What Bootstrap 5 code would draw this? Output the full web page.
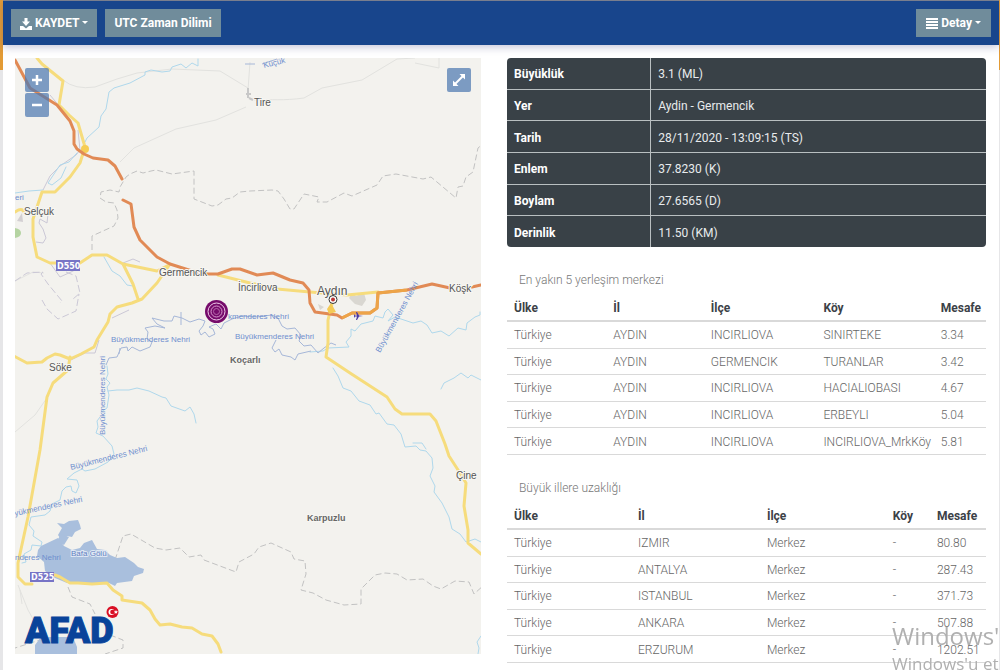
<!DOCTYPE html>
<html lang="tr">
<head>
<meta charset="utf-8">
<meta name="viewport" content="width=device-width, initial-scale=1">
<title>Deprem Detayı</title>
<link href="https://cdn.jsdelivr.net/npm/bootstrap@5.3.0/dist/css/bootstrap.min.css" rel="stylesheet">
<style>
body{font-family:Roboto,"Noto Sans",sans-serif;font-size:12px;line-height:18px;color:#777;background:linear-gradient(#e39b35 70px,#e6e6e8 70px) no-repeat #e6e6e8}
.panel{margin:0 1px 0 3px;min-height:100vh;background:#fff;border-top:1px solid #7f8490}
.topbar{background:#18458c;height:44px;padding:0 8px;box-shadow:0 2px 8px rgba(60,60,130,.3)}
.topbar .btn{--bs-btn-bg:#708c9b;--bs-btn-color:#fff;--bs-btn-border-color:#708c9b;--bs-btn-hover-bg:#607d8b;--bs-btn-border-radius:0;--bs-btn-font-size:12px;--bs-btn-font-weight:700;--bs-btn-padding-x:8px;--bs-btn-padding-y:4px;line-height:18px;height:28px}
.topbar .dropdown-toggle::after{border-width:3px;margin-left:3px}
.topbar .btn-detail{--bs-btn-padding-x:9px}
.content-grid{display:grid;grid-template-columns:466fr 479fr;gap:26px;padding:13px 13px 0 12px}
.map-canvas{display:block;width:100%;background:#f3f2ee}
.map-btn{width:24px;height:24px;border:0;padding:0;background:rgba(77,120,178,.72);color:#fff;border-radius:2px}
.zoom-box{left:10px;top:10px;gap:1px}
.full-box{right:10px;top:10px}
.town{font:10px "Liberation Sans",sans-serif;fill:#555;paint-order:stroke;stroke:#f7f6f2;stroke-width:2px}
.town-small{font-weight:700;font-size:9px;fill:#666}
.town-city{font-size:12px}
.river{font:8px "Liberation Sans",sans-serif;fill:#6f8fce}
.lake-label{fill:#5f80c2;paint-order:stroke;stroke:#dfe7f3;stroke-width:2px}
.shield{font:bold 8px "DejaVu Sans",sans-serif;fill:#fff}
.brandmark{font:900 36px Roboto,sans-serif;fill:#09439a;stroke:#09439a;stroke-width:1px}
.detail-table{height:189px;background:#394147;color:#e8ebed;border-radius:4px;overflow:hidden}
.detail-table th,.detail-table td{padding:6px 7px 4px;vertical-align:middle;border-bottom:1px solid #b9bfc1}
.detail-table th{width:30%;color:#fff;border-right:1px solid #b9bfc1}
.detail-table tr:last-child>*{border-bottom:0}
.section-title{font-size:12px;line-height:18px;font-weight:300;color:#777;margin:24px 0 6px 12px}
.distance-table{height:160px;table-layout:fixed;font-weight:300;color:#666}
.distance-table th,.distance-table td{padding:4px 0 3px 7px;vertical-align:middle;white-space:nowrap;border-bottom:1px solid #d9d9d9}
.distance-table th{color:#3c4147;font-weight:700;border-bottom:2px solid #d9d9d9}
.watermark{left:calc(100% - 108px);bottom:-8px;color:#b0b0b0;font-family:"Open Sans",sans-serif;pointer-events:none;white-space:nowrap}
.watermark-title{font-size:24px;line-height:28px}
.watermark-sub{font-size:17px;line-height:28px}
</style>
</head>
<body class="overflow-hidden">
<main class="panel">
<header class="topbar d-flex align-items-center position-relative">
  <button class="btn dropdown-toggle me-2" type="button"><svg width="12" height="12" viewBox="0 0 12 12" fill="#fff" aria-hidden="true"><path d="M4.500 0h3v3.500H10L6 8 2 3.500h2.500zM0 8h3l3 2.500L9 8h3v4H0z"/></svg> KAYDET</button>
  <button class="btn" type="button">UTC Zaman Dilimi</button>
  <button class="btn btn-detail dropdown-toggle ms-auto" type="button"><svg width="12" height="12" viewBox="0 0 12 12" fill="#fff" aria-hidden="true"><path d="M0 0h12v2H0zM0 3h12v2H0zM0 6h12v2H0zM0 9h12v2H0z"/></svg> Detay</button>
</header>
<div class="content-grid">
<section class="position-relative align-self-start">
<svg class="map-canvas" viewBox="15 58 466 596" role="img" aria-label="Harita">
  <g fill="none" stroke="#e2e2df" stroke-width="1">
    <path d="M63 80q12 10 32 7l22-8 20-6 35-4 48 2 28 17M250 62l-2 28q-2 10 8 10c16-1 26 1 48-2l18-10 40-8 35-21 18-1M120 162l14-14 42-19 40-9 30-13M415 63l24 5V58M15 432l20-17 14-20M18 585l10 25 18 32"/>
    <path d="M15 281l18-9 11 1M20 590l2 14"/>
  </g>
  <path d="M248 88v10m-2-4h5m-2 4l4 2" fill="none" stroke="#c8c8c8" stroke-width="2"/>
  <g fill="none" stroke="#c2c2c2" stroke-width="1" stroke-dasharray="6 3" stroke-linejoin="round">
    <path d="M92 250v-14l22-10 4-8-1-8-3-7-8-1-6-4 1-6 9-2 9 2 1-5 6-10 4-3 7-3 6 2 8-2 5-1 16 4 22-3v28l18 7 6-1 8-6 6-1 8-6 10-1 22-1 6 1 6 8 6 10h4l8-12 2-3 15 3-2 5h10l17-9 8 3 25-11 6-9 13-2 27 5 8-2 25 21 2-11 5-1 3-9 7-5 5-24 5-4 9 7 16 4"/>
    <path d="M115 560l8-24 8-2 24 14 11 2 14-2 9 9 12-2 3 5 32 12 3-10 15-8 5-7 12-4 20 9 3 7 11 2 1 13-5 16 12 3 13 7 18 5 17-1v-15l14-14 10-2 12 1 10 6 16-1 10 7 8 3 14-8 14 1 5 12 10-9 20 2"/>
    <path d="M68 587l4 10 18 7 5 10M110 635l13 5v8l-18 6M43 639l-28 9"/>
  </g>
  <g fill="none" stroke="#cbc8d6" stroke-width="1" stroke-linejoin="round">
    <path d="M78 130l2 20-4 5-16 11-10 10-7 14M43 208l5 6-1 9-7-4-1 4 4 6 3 9-3 5-7-1"/>
    <path d="M15 281l12-8 16-1-2 2 7 10 14 17-2 2M66 272l10 4 4 17-7 6M42 300l5 9 11 10 18-8 3-17" stroke-dasharray="7 3"/>
    <path d="M50 263l10 14 11-5 8-4M71 360l14-7h10l4-13M112 318l17-8M123 263l10-4 7 3M50 95l10 12"/>
  </g>
  <g fill="none" stroke="#afd8ec" stroke-width="1" stroke-linejoin="round" stroke-linecap="round">
    <path d="M85 142l2-4 12-11 2-11 5-7 3-17 5-4 16-5 15-8v-3l6-2 11 2 8-1 2-4 9-3 5 4 6-5 6 3v-7M77 153l-8 9-9 3-12 18 4 2 9-7 5-11M43 190l-14 1-14 2M104 257l8 14 8 5 7 9 6 1"/>
    <path d="M107 366l1 8-2 5 4 4-3 4 2 8-2 13-6 4M108 391l9-1h12l8-2 12 3 13 6 4 1 5 8 14 5 5-4 4 7 2 9M100 417l-3 4 1 6-2 6 7 3 9 10 2 8-6 8-13 7-10 2-3-2-8 4-7 6 10 1 2 6-3 7-4-2-1-5-5 1-4 4-2 9-8 4-2 7-5 4-14 2-2 8 5 6-1 5 9 6-1 4-9-1-1 5-7 4 2 8-4 1"/>
    <path d="M310 352l13-1 5-3 21-1-3-5 5-6v-7l4 2 6-7 12-3 2-5 8 2 2-6 3-3 5 6-5 6 7-4 18 6 8-2 6 4 5 8 9-2 8 5 9-8 8 2 1-7 8-6 5-2v-3M441 389l3-6 10-5 7-5 7 5 3-3 10 5M333 368l5 8 5 12 8 3 8 10 11 4 6 9 3-1 8 11 7 1 7 9 4 13 11-1 4 4 6 1 6 7 1 10-3 8 5 10-1 6 8 11 7 14 3 12 8 5 6 8 9-3 8 4-1 6 5 4M413 443h9l4 6M481 636l-4 6 2 6-1 6"/>
  </g>
  <g fill="none" stroke="#a6b7d8" stroke-width="1" stroke-linejoin="round">
    <path d="M106 365l3-7 8-1 4-9 6-1 1 4 4-4 8 4 10-4 2-5-5-3 1-7-3-4 10-2 10 2-8-4-5-6 12 3h8l2-5 8 2 8 4 9-3 6 2-2 5-4 5 2 4 4-3 4 5 6-3-2-5-4-2 7-3 5 5 3-6 8-4 10-3 14 1 16-2 6 3 4 8 5 3 8-1 6 7-2 6 5 5 7-1 7 8 6-5 7-5 5 2M181 312v13M120 348l-1 6M276 340l-4 8 3 4 4-3 3 6 9 2 4 3 3-6 13-3"/>
    <path d="M245 64h10M262 64l15-5"/>
  </g>
  <g fill="#a9bfdd">
    <path d="M38 550l3-4 17-8 6 8 8 4 8-2 4-5 8-3 5 9 8 1 5 5 7 3 8-1 9 6 4 4 6 2-1 4-9 3-2 5-15 2-2 3-6-3-20 1-22-1-12-5-10-7-1-9-7-6z"/>
    <path d="M35 654v-9l6-8h32l4 10v7z"/>
    <path d="M57 523l7 1 5-3 9-1 2 5 1 4-6 3-3 5-5-1-4 5-3-3-2-3 4-7z"/>
    <path d="M61 534l8 3-5 8-7-4z"/>
  </g>
  <path d="M352 293l4 3 8-3 2 7-4 6-7-2-6-6zM318 304l6 3-4 3zM312 280l4-1M322 277l3 1" fill="#d9d7d1"/>
  <path d="M17 221l5-8 1 9z" fill="#d3cfd2"/>
  <path d="M15 228q6 1 6 5t-6 5z" fill="#b5d4a2"/>
  <g fill="none" stroke="#f6dc7c" stroke-width="3" stroke-linejoin="round" stroke-linecap="round">
    <path d="M37 58l5 6 21 17-4 24 10 10 9 8 7 24-5 16-10 14-15 15H42l-9 27v18l4 20 13 6h6M80 263l12-8h15l16 9 34 7 12-6M123 264l10 20 5 15M170 264l-13 19-15 16-10 4-15 4-7 7-2 8-11 18-3 7-13 7-11 5-10-4-5-1-8 4-5 4-15 1-15-8M70 357l-2 13-15 13-6 14-7 53-12 67-10 46v14l7 7h7M55 575l5 2 10 6h8l14 1 15-1 6 7 9 6v4l20 3 8 7 5 9 5 6 10-1 12 3 10 1 10 6 10 2 6 8 3 8" />
    <path d="M218 275l32 8 27 6 33 3 37 3 31-3M333 300l-5 20v23l-2 14 24 16 37 24 8 12 7 5h28l6 7 9 23 4 12 11 17 6 10-2 23 4 24v13l13 11"/>
    <path d="M15 212q7-5 9 0" />
  </g>
  <circle cx="85" cy="149" r="4" fill="#f6cd55"/>
  <g fill="none" stroke="#e18a55" stroke-width="3" stroke-linejoin="round" stroke-linecap="round">
    <path d="M15 60l15 28 27 17 13 16 4 10v13l3 5 7 5 9 4 15 2 7 6 7 13M123 200l8 4 3 23 6 13 17 17 13 7 22 7 15 3h11l14-5h8l17 6 16-2 17 7 13 3 6 7 1 13 5 9 22 3 5 3 10-5h18l7-5 1-15 29-3 25-6 18 4M472 287l9-2"/>
  </g>
  <path d="M342 318l10-5h18l7-5 1-15 29-3" fill="none" stroke="#eda448" stroke-width="3" stroke-linejoin="round"/>
  <path d="M327 309l4-6 5 9-7 2z" fill="#f4ca55"/>
  <g fill="#7774c6"><path d="M56 260h24v11H56zM30 572h24v10H30z"/></g>
  <text class="shield" x="57" y="269">D550</text><text class="shield" x="31" y="580">D525</text>
  <text class="river" x="111" y="342">Büyükmenderes Nehri</text>
  <text class="river" x="228" y="319">kmenderes Nehri</text>
  <text class="river" x="235" y="339">Büyükmenderes Nehri</text>
  <text class="river" transform="translate(105 435) rotate(-90)">Büyükmenderes Nehri</text>
  <text class="river" transform="translate(380 353) rotate(-61)">Büyükmenderes Nehri</text>
  <text class="river" transform="translate(71 470) rotate(-14)">Büyükmenderes Nehri</text>
  <text class="river" transform="translate(15 516) rotate(-12)">yükmenderes Nehri</text>
  <text class="river" x="15" y="560">nderes Nehri</text>
  <text class="river lake-label" x="71" y="556">Bafa Gölü</text>
  <text class="river" x="15" y="200">eri</text>
  <text class="river" transform="translate(264 68) rotate(-14)">Küçük</text>
  <text class="town" x="254" y="106">Tire</text><text class="town" x="24" y="215">Selçuk</text>
  <text class="town" x="159" y="276">Germencik</text><text class="town" x="238" y="291">İncirliova</text>
  <text class="town town-city" x="317" y="295">Aydın</text>
  <text class="town" x="449" y="292">Köşk</text><text class="town town-small" x="230" y="363">Koçarlı</text>
  <text class="town" x="49" y="371">Söke</text><text class="town" x="456" y="479">Çine</text><text class="town town-small" x="307" y="521">Karpuzlu</text>
  <circle cx="333" cy="299.500" r="4" fill="#fff" stroke="#333"/><circle cx="333" cy="299.500" r="2" fill="#b33"/>
  <path d="M363 316l-4-.5-2-3.500h-1l1 3.500h-2l-1-1.500v4l1-1.500h2l-1 3.500h1l2-3.500z" fill="#4939a5"/>
  <circle cx="216.500" cy="311.500" r="11.500" fill="#760b6b"/><g fill="none" stroke="#efc9e9"><circle cx="216.500" cy="311.500" r="8.500"/><circle cx="216.500" cy="311.500" r="5.500" stroke="#d99bcf"/><circle cx="216.500" cy="311.500" r="3" stroke="#b566aa"/></g>
  <text class="brandmark" x="25" y="643">AFAD</text>
  <circle cx="112.500" cy="612" r="6" fill="#d90f24"/><circle cx="111.500" cy="612" r="3" fill="#fff"/><circle cx="112.500" cy="612" r="2.300" fill="#d90f24"/><path d="M116 610l.6 1.300 1.400.2-1.100.9.300 1.400-1.200-.7-1.300.7.300-1.400-1-.9 1.400-.2z" fill="#fff"/>
</svg>
<div class="zoom-box position-absolute d-flex flex-column">
  <button class="map-btn" type="button" aria-label="Yakınlaştır"><svg width="10" height="10" viewBox="0 0 10 10" class="d-block mx-auto"><path d="M5 0v10M0 5h10" stroke="#fff" stroke-width="2.500"/></svg></button>
  <button class="map-btn" type="button" aria-label="Uzaklaştır"><svg width="10" height="10" viewBox="0 0 10 10" class="d-block mx-auto"><path d="M0 5h10" stroke="#fff" stroke-width="2.500"/></svg></button>
</div>
<button class="map-btn full-box position-absolute" type="button" aria-label="Tam ekran"><svg width="14" height="14" viewBox="0 0 14 14" class="d-block mx-auto"><path d="M3 11l8-8" stroke="#fff" stroke-width="2"/><path d="M7.500 1H13v5.500zM1 7.500V13h5.500z" fill="#fff"/></svg></button>
</section>
<section>
<table class="detail-table w-100"><tbody>
<tr><th scope="row">Büyüklük</th><td>3.1 (ML)</td></tr>
<tr><th scope="row">Yer</th><td>Aydin - Germencik</td></tr>
<tr><th scope="row">Tarih</th><td>28/11/2020 - 13:09:15 (TS)</td></tr>
<tr><th scope="row">Enlem</th><td>37.8230 (K)</td></tr>
<tr><th scope="row">Boylam</th><td>27.6565 (D)</td></tr>
<tr><th scope="row">Derinlik</th><td>11.50 (KM)</td></tr>
</tbody></table>
<h2 class="section-title">En yakın 5 yerleşim merkezi</h2>
<table class="distance-table w-100">
<colgroup><col style="width:20.7%"><col style="width:20.4%"><col style="width:23.5%"><col style="width:24.5%"><col></colgroup>
<thead><tr><th>Ülke</th><th>İl</th><th>İlçe</th><th>Köy</th><th>Mesafe</th></tr></thead>
<tbody>
<tr><td>Türkiye</td><td>AYDIN</td><td>INCIRLIOVA</td><td>SINIRTEKE</td><td>3.34</td></tr>
<tr><td>Türkiye</td><td>AYDIN</td><td>GERMENCIK</td><td>TURANLAR</td><td>3.42</td></tr>
<tr><td>Türkiye</td><td>AYDIN</td><td>INCIRLIOVA</td><td>HACIALIOBASI</td><td>4.67</td></tr>
<tr><td>Türkiye</td><td>AYDIN</td><td>INCIRLIOVA</td><td>ERBEYLI</td><td>5.04</td></tr>
<tr><td>Türkiye</td><td>AYDIN</td><td>INCIRLIOVA</td><td>INCIRLIOVA_MrkKöy</td><td>5.81</td></tr>
</tbody></table>
<h2 class="section-title">Büyük illere uzaklığı</h2>
<table class="distance-table w-100">
<colgroup><col style="width:25.9%"><col style="width:26.9%"><col style="width:26.3%"><col style="width:9.2%"><col></colgroup>
<thead><tr><th>Ülke</th><th>İl</th><th>İlçe</th><th>Köy</th><th>Mesafe</th></tr></thead>
<tbody>
<tr><td>Türkiye</td><td>IZMIR</td><td>Merkez</td><td>-</td><td>80.80</td></tr>
<tr><td>Türkiye</td><td>ANTALYA</td><td>Merkez</td><td>-</td><td>287.43</td></tr>
<tr><td>Türkiye</td><td>ISTANBUL</td><td>Merkez</td><td>-</td><td>371.73</td></tr>
<tr><td>Türkiye</td><td>ANKARA</td><td>Merkez</td><td>-</td><td>507.88</td></tr>
<tr><td>Türkiye</td><td>ERZURUM</td><td>Merkez</td><td>-</td><td>1202.51</td></tr>
</tbody></table>
</section>
</div>
</main>
<div class="watermark position-fixed"><div class="watermark-title">Windows'</div><div class="watermark-sub">Windows'u et</div></div>
<script src="https://cdn.jsdelivr.net/npm/bootstrap@5.3.0/dist/js/bootstrap.bundle.min.js"></script>
</body>
</html>
